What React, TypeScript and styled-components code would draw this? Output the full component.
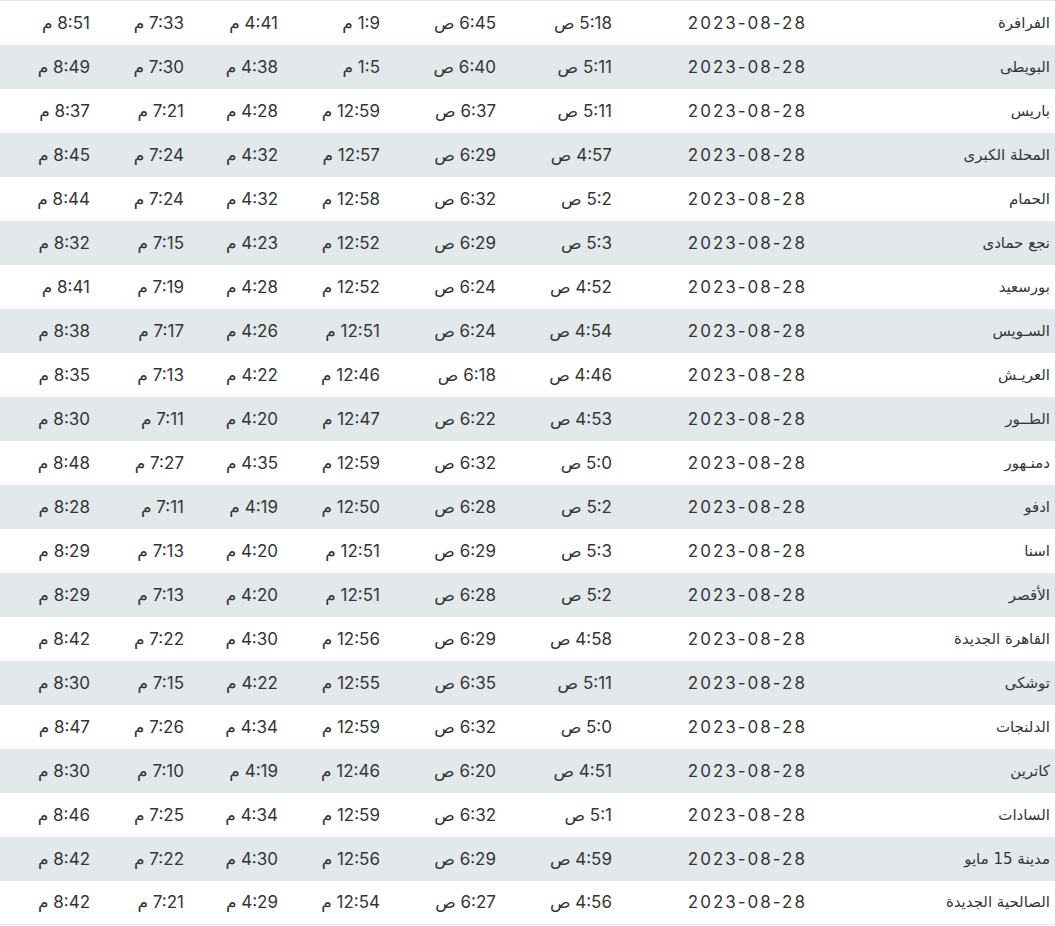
import React from 'react';
import styled, { createGlobalStyle } from 'styled-components';

const GlobalStyle = createGlobalStyle`
  html, body {
    margin: 0;
    padding: 0;
    background: #ffffff;
  }
`;

// الفجر / الشروق / الظهر / العصر / المغرب / العشاء
type Row = [string, string, string, string, string, string, string];

const DATE = '2023-08-28';

const rows: Row[] = [
  ['الفرافرة', '5:18 ص', '6:45 ص', '1:9 م', '4:41 م', '7:33 م', '8:51 م'],
  ['البويطى', '5:11 ص', '6:40 ص', '1:5 م', '4:38 م', '7:30 م', '8:49 م'],
  ['باريس', '5:11 ص', '6:37 ص', '12:59 م', '4:28 م', '7:21 م', '8:37 م'],
  ['المحلة الكبرى', '4:57 ص', '6:29 ص', '12:57 م', '4:32 م', '7:24 م', '8:45 م'],
  ['الحمام', '5:2 ص', '6:32 ص', '12:58 م', '4:32 م', '7:24 م', '8:44 م'],
  ['نجع حمادى', '5:3 ص', '6:29 ص', '12:52 م', '4:23 م', '7:15 م', '8:32 م'],
  ['بورسعيد', '4:52 ص', '6:24 ص', '12:52 م', '4:28 م', '7:19 م', '8:41 م'],
  ['السـويس', '4:54 ص', '6:24 ص', '12:51 م', '4:26 م', '7:17 م', '8:38 م'],
  ['العريـش', '4:46 ص', '6:18 ص', '12:46 م', '4:22 م', '7:13 م', '8:35 م'],
  ['الطــور', '4:53 ص', '6:22 ص', '12:47 م', '4:20 م', '7:11 م', '8:30 م'],
  ['دمنـهور', '5:0 ص', '6:32 ص', '12:59 م', '4:35 م', '7:27 م', '8:48 م'],
  ['ادفو', '5:2 ص', '6:28 ص', '12:50 م', '4:19 م', '7:11 م', '8:28 م'],
  ['اسنا', '5:3 ص', '6:29 ص', '12:51 م', '4:20 م', '7:13 م', '8:29 م'],
  ['الأقصر', '5:2 ص', '6:28 ص', '12:51 م', '4:20 م', '7:13 م', '8:29 م'],
  ['القاهرة الجديدة', '4:58 ص', '6:29 ص', '12:56 م', '4:30 م', '7:22 م', '8:42 م'],
  ['توشكى', '5:11 ص', '6:35 ص', '12:55 م', '4:22 م', '7:15 م', '8:30 م'],
  ['الدلنجات', '5:0 ص', '6:32 ص', '12:59 م', '4:34 م', '7:26 م', '8:47 م'],
  ['كاترين', '4:51 ص', '6:20 ص', '12:46 م', '4:19 م', '7:10 م', '8:30 م'],
  ['السادات', '5:1 ص', '6:32 ص', '12:59 م', '4:34 م', '7:25 م', '8:46 م'],
  ['مدينة 15 مايو', '4:59 ص', '6:29 ص', '12:56 م', '4:30 م', '7:22 م', '8:42 م'],
  ['الصالحية الجديدة', '4:56 ص', '6:27 ص', '12:54 م', '4:29 م', '7:21 م', '8:42 م'],
];

// column widths, right to left
const widths = [245, 193, 116, 116, 102, 94, 94, 95];

const Table = styled.table`
  width: 1055px;
  border-collapse: collapse;
  table-layout: fixed;
  direction: rtl;
  border-top: 1px solid #e6e9eb;
  border-bottom: 1px solid #e6e9eb;
  font-family: Inter, 'DejaVu Sans', sans-serif;
  color: #333536;
`;

const Tr = styled.tr<{ $striped: boolean }>`
  height: 44px;
  background: ${(p) => (p.$striped ? '#e3e8ea' : '#ffffff')};
`;

const Td = styled.td`
  padding: 0 5px 0 0;
  text-align: right;
  vertical-align: middle;
  font-size: 17px;
  white-space: nowrap;
  overflow: hidden;
`;

const CityTd = styled(Td)`
  font-family: 'DejaVu Sans', sans-serif;
  font-size: 15px;
`;

const DateTd = styled(Td)`
  letter-spacing: 2px;
  padding-right: 3px;
`;

const App = () => {
  return (
    <>
      <GlobalStyle />
      <Table>
        <colgroup>
          {widths.map((w, i) => (
            <col key={i} style={{ width: w }} />
          ))}
        </colgroup>
        <tbody>
          {rows.map((r, i) => (
            <Tr key={i} $striped={i % 2 === 1}>
              <CityTd>{r[0]}</CityTd>
              <DateTd>{DATE}</DateTd>
              {r.slice(1).map((t, j) => (
                <Td key={j}>{t}</Td>
              ))}
            </Tr>
          ))}
        </tbody>
      </Table>
    </>
  );
};

export default App;
